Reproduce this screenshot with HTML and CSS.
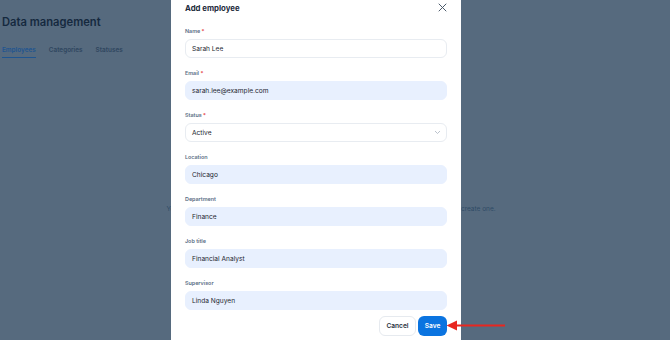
FILE: index.html
```html
<!DOCTYPE html>
<html lang="en">
<head>
    <meta charset="UTF-8">
    <title>Data management</title>
    <link rel="stylesheet" href="styles.css">
</head>
<body>
    <div class="page">
        <h1 class="page-title">Data management</h1>
        <div class="tabs">
            <span class="tab tab-active">Employees</span>
            <span class="tab">Categories</span>
            <span class="tab">Statuses</span>
        </div>
        <p class="empty-note">You haven't added any employees yet. Use the &ldquo;Add employee&rdquo; button in the top right corner to create one.</p>
    </div>

    <!-- Add employee dialog -->
    <div class="modal">
        <div class="modal-header">
            <span class="modal-title">Add employee</span>
            <svg class="close-icon" width="9" height="9" viewBox="0 0 9 9">
                <path d="M1 1 L8 8 M8 1 L1 8" stroke="#4b5b6c" stroke-width="1" fill="none" stroke-linecap="round"/>
            </svg>
        </div>

        <div class="field">
            <div class="label">Name <span class="req">*</span></div>
            <div class="input">Sarah Lee</div>
        </div>
        <div class="field">
            <div class="label">Email <span class="req">*</span></div>
            <div class="input input-filled">sarah.lee@example.com</div>
        </div>
        <div class="field">
            <div class="label">Status <span class="req">*</span></div>
            <div class="input select">
                <span>Active</span>
                <svg width="7" height="5" viewBox="0 0 7 5">
                    <path d="M1 1 L3.5 3.5 L6 1" stroke="#a9b3bf" stroke-width="0.8" fill="none"/>
                </svg>
            </div>
        </div>
        <div class="field">
            <div class="label">Location</div>
            <div class="input input-filled">Chicago</div>
        </div>
        <div class="field">
            <div class="label">Department</div>
            <div class="input input-filled">Finance</div>
        </div>
        <div class="field">
            <div class="label">Job title</div>
            <div class="input input-filled">Financial Analyst</div>
        </div>
        <div class="field">
            <div class="label">Supervisor</div>
            <div class="input input-filled">Linda Nguyen</div>
        </div>

        <div class="modal-footer">
            <button class="btn btn-cancel">Cancel</button>
            <button class="btn btn-save">Save</button>
        </div>
    </div>

    <svg class="pointer-arrow" width="62" height="13" viewBox="0 0 62 13">
        <line x1="9" y1="6.5" x2="59" y2="6.5" stroke="#e8261f" stroke-width="2"/>
        <polygon points="0.5,6.5 11,1.5 11,11.5" fill="#e8261f"/>
    </svg>
</body>
</html>
```

FILE: styles.css
```css
body {
    margin: 0;
    width: 670px;
    height: 340px;
    overflow: hidden;
    background-color: #566a7e;
    font-family: Inter, "Noto Sans", sans-serif;
    position: relative;
}

.page {
    padding: 14px 0 0 2px;
}

.page-title {
    margin: 0;
    font-size: 11.2px;
    line-height: 16px;
    font-weight: 600;
    color: #15293e;
}

.tabs {
    display: flex;
    gap: 13px;
    margin-top: 16px;
}

.tab {
    font-size: 6.4px;
    line-height: 9px;
    font-weight: 600;
    color: #2f465e;
    padding-bottom: 2px;
}

.tab-active {
    color: #1f5590;
    border-bottom: 1px solid #1f5590;
}

.empty-note {
    margin: 146px 0 0;
    padding-right: 10px;
    white-space: nowrap;
    text-align: center;
    font-size: 6.5px;
    line-height: 10px;
    color: #2f4b66;
}

.modal {
    position: absolute;
    left: 171px;
    top: 0;
    width: 290px;
    height: 340px;
    box-sizing: border-box;
    padding: 0 14px;
    background-color: #fff;
}

.modal-header {
    display: flex;
    justify-content: space-between;
    align-items: center;
    height: 15px;
    margin-bottom: 12px;
}

.modal-title {
    font-size: 7.8px;
    font-weight: 700;
    color: #1c2b3b;
}

.field {
    margin-bottom: 11px;
}

.label {
    font-size: 5.4px;
    line-height: 8px;
    font-weight: 600;
    color: #5a6e85;
    margin-bottom: 4px;
}

.req {
    color: #e5484d;
}

.input {
    height: 19px;
    box-sizing: border-box;
    display: flex;
    align-items: center;
    padding: 0 6px;
    border: 1px solid #e8ecf1;
    border-radius: 6px;
    background-color: #fff;
    font-size: 6.6px;
    color: #1d2630;
}

.input-filled {
    background-color: #e8f0fe;
    border-color: #e8f0fe;
}

.select {
    justify-content: space-between;
    padding-right: 5px;
}

.modal-footer {
    display: flex;
    justify-content: flex-end;
    gap: 2px;
    margin-top: -5px;
}

.btn {
    height: 20px;
    box-sizing: border-box;
    border-radius: 6px;
    font-family: Inter, "Noto Sans", sans-serif;
    font-size: 6.6px;
    font-weight: 600;
    padding: 0;
}

.btn-cancel {
    width: 37px;
    background-color: #fff;
    border: 1px solid #e6eaef;
    color: #2a3441;
}

.btn-save {
    width: 29px;
    background-color: #0b74e0;
    border: none;
    color: #fff;
}

.pointer-arrow {
    position: absolute;
    left: 446px;
    top: 319px;
}
```
